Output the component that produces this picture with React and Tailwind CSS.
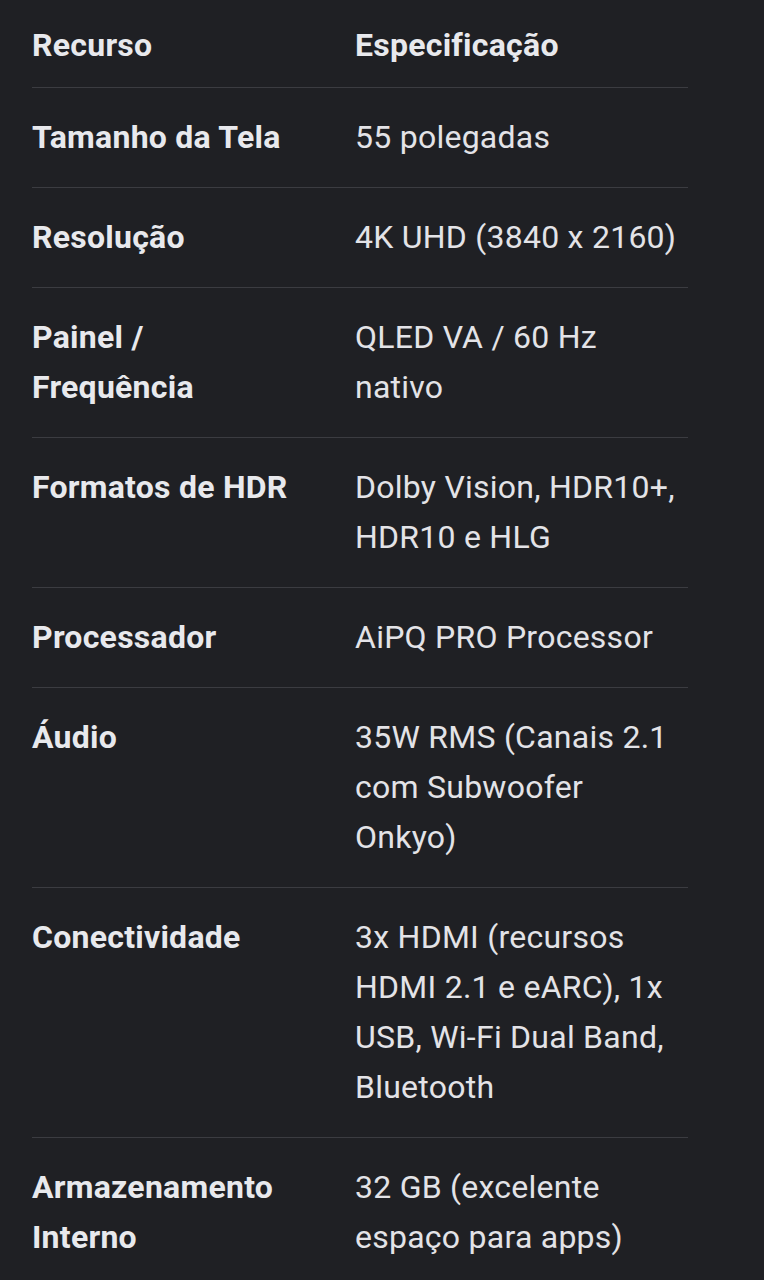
const rows = [
  ["Tamanho da Tela", "55 polegadas"],
  ["Resolução", "4K UHD (3840 x 2160)"],
  ["Painel / Frequência", "QLED VA / 60 Hz nativo"],
  ["Formatos de HDR", "Dolby Vision, HDR10+, HDR10 e HLG"],
  ["Processador", "AiPQ PRO Processor"],
  ["Áudio", "35W RMS (Canais 2.1 com Subwoofer Onkyo)"],
  ["Conectividade", "3x HDMI (recursos HDMI 2.1 e eARC), 1x USB, Wi-Fi Dual Band, Bluetooth"],
  ["Armazenamento Interno", "32 GB (excelente espaço para apps)"],
];

export default function App() {
  return (
    <div
      className="min-h-[1280px] w-[764px] bg-[#1f2024] px-8 overflow-hidden"
      style={{ fontFamily: "Roboto, 'Noto Sans', sans-serif" }}
    >
      <div className="w-[656px] text-[32px] leading-[50px] tracking-[0.25px]">
        <div className="flex border-b border-[#3b3c41] pt-[20px] pb-[17px] font-bold text-[#e8e9ed]">
          <div className="w-[323px] shrink-0 pr-[56px]">Recurso</div>
          <div className="flex-1">Especificação</div>
        </div>
        {rows.map(([k, v]) => (
          <div key={k} className="flex border-b border-[#3b3c41] pt-[24px] pb-[25px]">
            <div className="w-[323px] shrink-0 pr-[56px] font-bold text-[#e8e9ed]">{k}</div>
            <div className="flex-1 pr-[6px] text-[#e3e3e7]">{v}</div>
          </div>
        ))}
      </div>
    </div>
  );
}
